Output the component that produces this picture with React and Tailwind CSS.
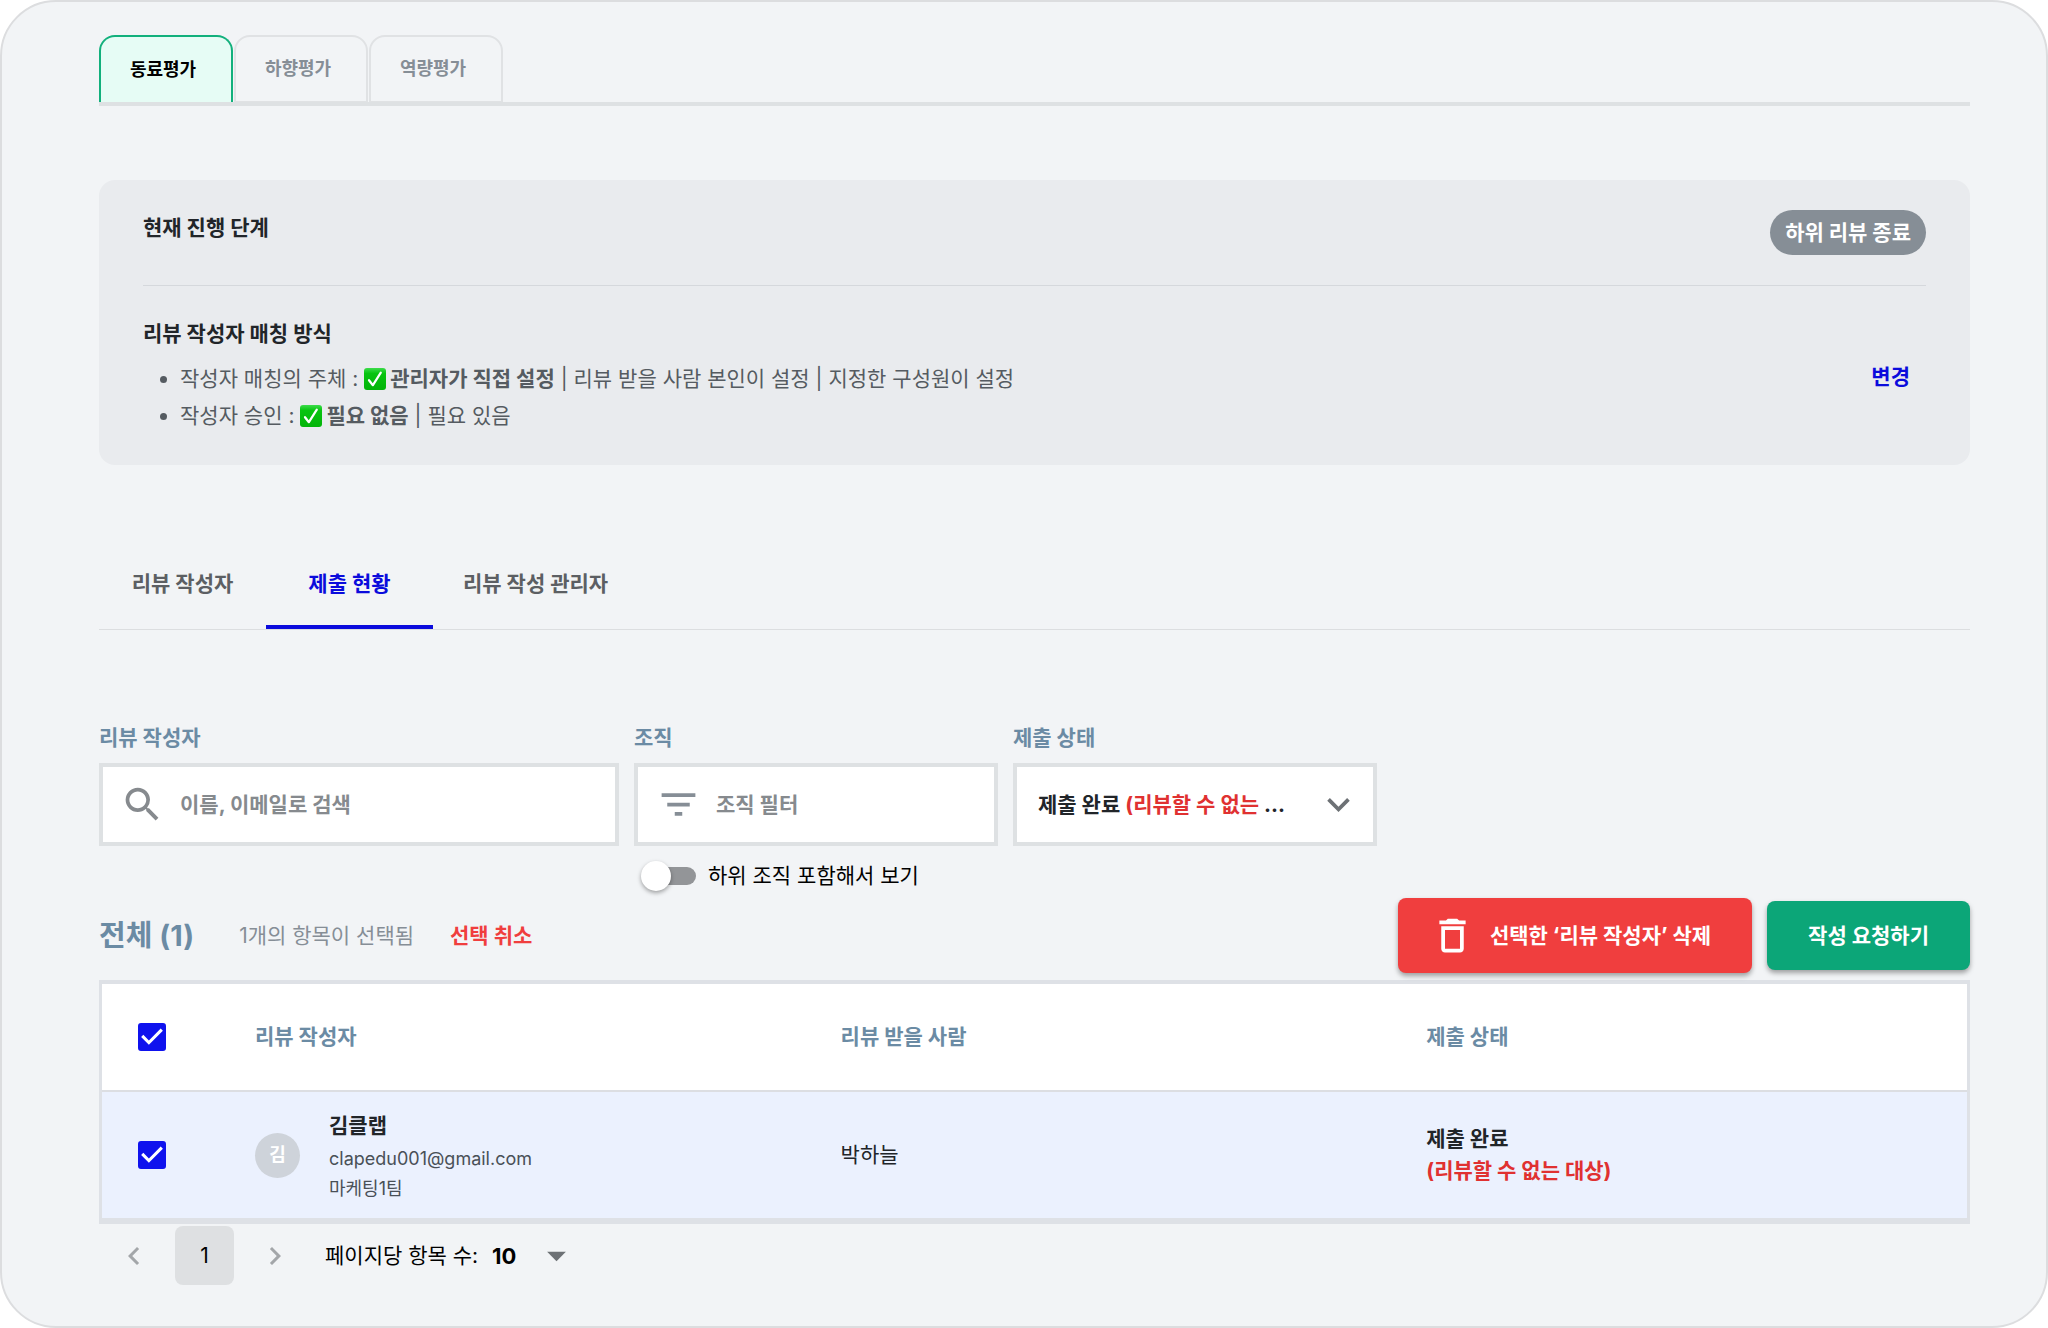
import { useState } from "react";
import clsx from "clsx";
import {
  MdArrowDropDown,
  MdChevronLeft,
  MdChevronRight,
  MdDeleteOutline,
  MdFilterList,
  MdKeyboardArrowDown,
  MdSearch,
} from "react-icons/md";

const reviewTypes = ["동료평가", "하향평가", "역량평가"];
const sections = ["리뷰 작성자", "제출 현황", "리뷰 작성 관리자"];

const rows = [
  {
    id: 1,
    name: "김클랩",
    initial: "김",
    email: "clapedu001@gmail.com",
    team: "마케팅1팀",
    reviewee: "박하늘",
    status: "제출 완료",
    note: "(리뷰할 수 없는 대상)",
  },
];

function CheckMark() {
  return (
    <svg viewBox="0 0 22 22" className="mr-1 inline-block size-[22px] align-[-4px]" aria-hidden="true">
      <defs>
        <linearGradient id="mark" x1="0" y1="0" x2="0" y2="1">
          <stop offset="0" stopColor="#3ddc4b" />
          <stop offset="0.25" stopColor="#08c410" />
          <stop offset="1" stopColor="#03b409" />
        </linearGradient>
      </defs>
      <rect width="22" height="22" rx="3" fill="url(#mark)" />
      <path
        d="M5 12.2l3.9 5L16.8 4.6"
        fill="none"
        stroke="#fff"
        strokeWidth="2.2"
        strokeLinecap="round"
        strokeLinejoin="round"
      />
    </svg>
  );
}

function Checkbox({ label, checked, onChange }) {
  return (
    <label className="relative block size-7">
      <input
        type="checkbox"
        aria-label={label}
        checked={checked}
        onChange={onChange}
        className="peer block size-7 appearance-none rounded-[3px] border-2 border-[#868e96] checked:border-[#0f12ee] checked:bg-[#0f12ee]"
      />
      <svg
        viewBox="3 3 18 18"
        className="pointer-events-none absolute inset-0 hidden size-7 peer-checked:block"
        aria-hidden="true"
      >
        <path d="M10 17l-5-5 1.41-1.41L10 14.17l7.59-7.59L19 8z" fill="#fff" />
      </svg>
    </label>
  );
}

function ReviewTypeTabs() {
  const [active, setActive] = useState(0);
  return (
    <div role="tablist" className="flex gap-px border-b-4 border-[#dee1e3]">
      {reviewTypes.map((type, i) => (
        <button
          key={type}
          type="button"
          role="tab"
          aria-selected={i === active}
          onClick={() => setActive(i)}
          className={clsx(
            "h-[67px] w-[134px] rounded-t-2xl pr-[6px] text-[18px] font-bold leading-6",
            i === active
              ? "border-2 border-b-0 border-[#12b07c] bg-[#e6fcf5] text-black"
              : "border-2 border-b border-[#e0e2e4] text-[#868e96]"
          )}
        >
          {type}
        </button>
      ))}
    </div>
  );
}

function StagePanel() {
  return (
    <section className="mt-[74px] rounded-2xl bg-[#e9ebee] px-11 pt-[30px] pb-[31px]">
      <div className="flex items-start justify-between border-b border-[#d5d8dc] pb-[30px]">
        <h2 className="font-bold leading-9">현재 진행 단계</h2>
        <span className="rounded-full bg-[#868e96] px-[15px] font-bold leading-[45px] text-white">
          하위 리뷰 종료
        </span>
      </div>
      <div className="flex items-center justify-between pt-[33px]">
        <div>
          <h2 className="font-bold">리뷰 작성자 매칭 방식</h2>
          <ul className="mt-[11px] list-disc pl-[37px] leading-[37px] text-[#555b61]">
            <li>
              작성자 매칭의 주체 : <CheckMark />
              <b>관리자가 직접 설정</b> | 리뷰 받을 사람 본인이 설정 | 지정한 구성원이 설정
            </li>
            <li>
              작성자 승인 : <CheckMark />
              <b>필요 없음</b> | 필요 있음
            </li>
          </ul>
        </div>
        <button type="button" className="px-4 font-bold text-[#0b0bdc]">
          변경
        </button>
      </div>
    </section>
  );
}

function SectionTabs() {
  const [active, setActive] = useState(1);
  return (
    <div role="tablist" className="mt-[73px] flex border-b border-[#dcdee0]">
      {sections.map((section, i) => (
        <button
          key={section}
          type="button"
          role="tab"
          aria-selected={i === active}
          onClick={() => setActive(i)}
          className={clsx(
            "h-[91px] min-w-[167px] px-[30px] font-bold",
            i === active ? "text-[#0b0bdc] shadow-[inset_0_-4px_0_#0b0bdc]" : "text-[#5c5f63]"
          )}
        >
          {section}
        </button>
      ))}
    </div>
  );
}

function Filters() {
  const [includeSub, setIncludeSub] = useState(false);
  return (
    <div className="mt-[93px] flex items-start gap-[15px]">
      <div className="w-[520px]">
        <label htmlFor="writer" className="block font-bold text-[#6b8ba4]">
          리뷰 작성자
        </label>
        <div className="mt-[10px] flex h-[83px] items-center gap-[15px] border-4 border-[#dee1e3] bg-white pl-[17px]">
          <MdSearch className="size-[45px] shrink-0 text-[#868a8e]" />
          <input
            id="writer"
            type="text"
            placeholder="이름, 이메일로 검색"
            className="w-full min-w-0 font-bold outline-none placeholder:text-[#868a8e]"
          />
        </div>
      </div>

      <div className="w-[364px]">
        <label htmlFor="org" className="block font-bold text-[#6b8ba4]">
          조직
        </label>
        <div className="mt-[10px] flex h-[83px] items-center gap-[15px] border-4 border-[#dee1e3] bg-white pl-[18px]">
          <MdFilterList className="size-[45px] shrink-0 text-[#868e96]" />
          <input
            id="org"
            type="text"
            placeholder="조직 필터"
            className="w-full min-w-0 font-bold outline-none placeholder:text-[#868a8e]"
          />
        </div>
        <label className="mt-[15px] flex items-center gap-3 pl-[7px] text-black">
          <span className="relative flex h-[30px] w-[55px] items-center justify-end">
            <input
              type="checkbox"
              role="switch"
              checked={includeSub}
              onChange={(e) => setIncludeSub(e.target.checked)}
              className="peer h-[18px] w-[50px] appearance-none rounded-full bg-[#939598] checked:bg-[#0b0bdc]"
            />
            <span className="pointer-events-none absolute top-0 left-0 size-[30px] rounded-full bg-white shadow-[0_2px_4px_rgba(0,0,0,0.35)] peer-checked:left-[25px]" />
          </span>
          하위 조직 포함해서 보기
        </label>
      </div>

      <div className="w-[364px]">
        <label htmlFor="status" className="block font-bold text-[#6b8ba4]">
          제출 상태
        </label>
        <div className="relative mt-[10px] flex h-[83px] items-center justify-between border-4 border-[#dee1e3] bg-white pr-3 pl-[21px] font-bold">
          <span aria-hidden="true">
            제출 완료 <span className="text-[#e03131]">(리뷰할 수 없는</span> ...
          </span>
          <MdKeyboardArrowDown className="size-[45px] text-[#6d7175]" />
          <select id="status" className="absolute inset-0 size-full opacity-0">
            <option>제출 완료 (리뷰할 수 없는 대상)</option>
          </select>
        </div>
      </div>
    </div>
  );
}

function Toolbar({ count, onClear }) {
  return (
    <div className="mt-[7px] flex items-center">
      <h2 className="text-[29px] font-bold leading-10 text-[#6b8ba4]">전체 (1)</h2>
      <span className="ml-[45px] text-[#868e96]">{count}개의 항목이 선택됨</span>
      <button type="button" onClick={onClear} className="ml-9 font-bold text-[#f03e3e]">
        선택 취소
      </button>
      <div className="ml-auto flex items-center gap-[15px] text-white">
        <button
          type="button"
          className="flex h-[75px] items-center gap-[15px] rounded-lg bg-[#f03e3e] pr-[41px] pl-8 font-bold shadow-[0_3px_5px_rgba(0,0,0,0.35)]"
        >
          <MdDeleteOutline className="size-[45px]" />
          선택한 ‘리뷰 작성자’ 삭제
        </button>
        <button
          type="button"
          className="h-[69px] rounded-lg bg-[#0ca678] px-[41px] font-bold shadow-[0_3px_5px_rgba(0,0,0,0.35)]"
        >
          작성 요청하기
        </button>
      </div>
    </div>
  );
}

function ReviewTable({ selected, onToggle, onToggleAll }) {
  return (
    <div className="mt-[7px] border-x-[3px] border-t-4 border-b-[6px] border-[#dee1e6] bg-white">
      <table className="w-full table-fixed text-left">
        <thead>
          <tr className="h-[107px] border-b-2 border-[#dcdee2] text-[#6b8ba4]">
            <th className="w-[137px] pl-9">
              <Checkbox
                label="전체 선택"
                checked={selected.length === rows.length}
                onChange={onToggleAll}
              />
            </th>
            <th className="w-[31.4%] px-4 font-bold">리뷰 작성자</th>
            <th className="w-[31.4%] px-4 font-bold">리뷰 받을 사람</th>
            <th className="px-4 font-bold">제출 상태</th>
          </tr>
        </thead>
        <tbody>
          {rows.map((row) => {
            const checked = selected.includes(row.id);
            return (
              <tr key={row.id} className={clsx("h-[127px]", checked && "bg-[#ebf1fe]")}>
                <td className="pl-9">
                  <Checkbox
                    label={`${row.name} 선택`}
                    checked={checked}
                    onChange={() => onToggle(row.id)}
                  />
                </td>
                <td className="px-4">
                  <div className="flex items-center gap-[29px]">
                    <span className="grid size-[45px] shrink-0 place-items-center rounded-full bg-[#ced3da] text-[18px] font-bold text-white">
                      {row.initial}
                    </span>
                    <div className="text-[18px] leading-[30px] text-[#495057]">
                      <div className="text-[21px] font-bold leading-[37px] text-[#212529]">
                        {row.name}
                      </div>
                      <div>{row.email}</div>
                      <div>{row.team}</div>
                    </div>
                  </div>
                </td>
                <td className="px-4">{row.reviewee}</td>
                <td className="px-4 font-bold leading-8">
                  {row.status}
                  <div className="text-[#e03131]">{row.note}</div>
                </td>
              </tr>
            );
          })}
        </tbody>
      </table>
    </div>
  );
}

function Pagination() {
  return (
    <div className="mt-[2px] flex items-center pl-[17px] text-black">
      <button type="button" aria-label="이전 페이지" className="text-[#a3a6a9]">
        <MdChevronLeft className="size-9" />
      </button>
      <button type="button" className="mx-[23px] h-[59px] w-[59px] rounded-lg bg-[#dee0e2]">
        1
      </button>
      <button type="button" aria-label="다음 페이지" className="text-[#a3a6a9]">
        <MdChevronRight className="size-9" />
      </button>
      <label htmlFor="page-size" className="ml-8">
        페이지당 항목 수:
      </label>
      <div className="relative ml-[14px] flex items-center">
        <select
          id="page-size"
          className="w-[87px] appearance-none text-[22px] font-bold outline-none"
        >
          <option>10</option>
          <option>20</option>
          <option>50</option>
        </select>
        <MdArrowDropDown className="pointer-events-none absolute right-0 size-[45px] text-[#6d7175]" />
      </div>
    </div>
  );
}

export default function App() {
  const [selected, setSelected] = useState([1]);

  const toggle = (id) =>
    setSelected((prev) => (prev.includes(id) ? prev.filter((v) => v !== id) : [...prev, id]));

  const toggleAll = () =>
    setSelected((prev) => (prev.length === rows.length ? [] : rows.map((r) => r.id)));

  return (
    <div className="min-h-screen bg-white">
      <main
        lang="ko"
        className="min-h-screen rounded-[56px] border-2 border-[#dcdddf] bg-[#f2f4f6] pt-[33px] pr-[76px] pb-8 pl-[97px] font-['Inter','Noto_Sans_CJK_KR',sans-serif] text-[21px] leading-[30px] text-[#212529]"
      >
        <ReviewTypeTabs />
        <StagePanel />
        <SectionTabs />
        <Filters />
        <Toolbar count={selected.length} onClear={() => setSelected([])} />
        <ReviewTable selected={selected} onToggle={toggle} onToggleAll={toggleAll} />
        <Pagination />
      </main>
    </div>
  );
}
